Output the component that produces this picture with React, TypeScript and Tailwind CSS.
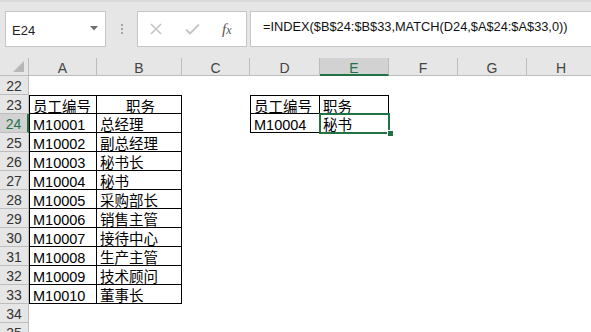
const cols = ["A", "B", "C", "D", "E", "F", "G", "H"];

const cells: Record<string, string> = {
  A23: "员工编号",
  B23: "职务",
  D23: "员工编号",
  E23: "职务",
  D24: "M10004",
  E24: "秘书",
};

const staff = [
  ["M10001", "总经理"],
  ["M10002", "副总经理"],
  ["M10003", "秘书长"],
  ["M10004", "秘书"],
  ["M10005", "采购部长"],
  ["M10006", "销售主管"],
  ["M10007", "接待中心"],
  ["M10008", "生产主管"],
  ["M10009", "技术顾问"],
  ["M10010", "董事长"],
];
staff.forEach(([id, job], i) => {
  cells[`A${24 + i}`] = id;
  cells[`B${24 + i}`] = job;
});

const rows = Array.from({ length: 14 }, (_, i) => 22 + i);

const inTable = (r: number, c: number) =>
  (r >= 23 && r <= 33 && c <= 1) || (r >= 23 && r <= 24 && (c === 3 || c === 4));

function Cell({ r, c }: { r: number; c: number }) {
  const key = `${cols[c]}${r}`;
  const bordered = inTable(r, c);
  const cls = [
    "overflow-hidden whitespace-nowrap bg-white pl-[3px] pt-[3px] leading-[17px] text-[14.5px] text-black",
    bordered ? "border-r border-b border-black" : "",
    bordered && r === 23 ? "border-t" : "",
    bordered && (c === 0 || c === 3) ? "border-l" : "",
    key === "B23" ? "text-center pl-0" : "",
  ].join(" ");
  return <div className={cls}>{cells[key] ?? ""}</div>;
}

export default function App() {
  return (
    <div className="relative h-[332px] w-[591px] overflow-hidden bg-[#e6e6e6] font-['Liberation_Sans','Noto_Sans_CJK_SC',sans-serif]">
      {/* formula bar */}
      <div className="flex h-[58px] items-start border-t-2 border-[#dadada] pt-[9px]">
        <div className="ml-[5px] flex h-[36px] w-[101px] items-center justify-between border border-[#c6c6c6] bg-white pl-[6px] pr-[7px]">
          <span className="pt-[3px] text-[13px] text-[#222]">E24</span>
          <svg width="8" height="5" viewBox="0 0 8 5" className="mt-[-2px]">
            <path d="M0 0h8L4 4.5z" fill="#6f6f6f" />
          </svg>
        </div>
        <div className="flex w-[31px] justify-center pt-[13px]">
          <div className="flex flex-col gap-[2px]">
            <span className="h-[2px] w-[2px] bg-[#a6a6a6]" />
            <span className="h-[2px] w-[2px] bg-[#a6a6a6]" />
            <span className="h-[2px] w-[2px] bg-[#a6a6a6]" />
          </div>
        </div>
        <div className="flex h-[36px] w-[110px] items-center border border-[#c6c6c6] bg-white">
          <svg width="12" height="12" viewBox="0 0 12 12" className="ml-[12px]">
            <path d="M1 1l10 10M11 1L1 11" stroke="#c4c4c4" strokeWidth="1.6" />
          </svg>
          <svg width="15" height="12" viewBox="0 0 15 12" className="ml-[23px]">
            <path d="M1 6.5l4 4L14 1.5" stroke="#c4c4c4" strokeWidth="1.8" fill="none" />
          </svg>
          <span className="ml-[22px] font-['Liberation_Serif',serif] text-[15px] italic leading-none text-[#555]">
            f<span className="text-[12px]">x</span>
          </span>
        </div>
        <div className="ml-[3px] h-[36px] flex-1 border border-r-0 border-[#c6c6c6] bg-white pl-[12px] pt-[7px] text-[12.8px] leading-[16px] text-[#111] whitespace-nowrap">
          =INDEX($B$24:$B$33,MATCH(D24,$A$24:$A$33,0))
        </div>
      </div>

      {/* sheet */}
      <div className="grid grid-cols-[29px_68px_85px_68px_70px_69px_69px_69px_69px] grid-rows-[18px_repeat(14,19px)] bg-white">
        <div className="relative border-r border-b border-[#bdbdbd] bg-[#e6e6e6]">
          <svg width="11" height="11" viewBox="0 0 11 11" className="absolute bottom-[3px] right-[4px]">
            <path d="M11 0V11H0z" fill="#b7b7b7" />
          </svg>
        </div>
        {cols.map((c) => (
          <div
            key={c}
            className={
              c === "E"
                ? "border-b-2 border-r border-b-[#217346] border-r-[#bdbdbd] bg-[#d2d2d2] pt-[1px] text-center text-[14px] leading-[18px] text-[#217346]"
                : "border-b border-r border-[#bdbdbd] bg-[#e6e6e6] pt-[1px] text-center text-[14px] leading-[18px] text-[#444]"
            }
          >
            {c}
          </div>
        ))}
        {rows.map((r) => (
          <div key={r} className="contents">
            <div
              className={
                r === 24
                  ? "border-b border-r-2 border-b-[#bdbdbd] border-r-[#217346] bg-[#d2d2d2] pt-[2px] text-center text-[14px] leading-[17px] text-[#217346]"
                  : "border-b border-r border-[#bdbdbd] bg-[#e6e6e6] pt-[2px] text-center text-[14px] leading-[17px] text-[#333]"
              }
            >
              {r}
            </div>
            {cols.map((c, ci) => (
              <Cell key={c} r={r} c={ci} />
            ))}
          </div>
        ))}
      </div>

      {/* selection of E24 with its fill handle */}
      <div className="pointer-events-none absolute left-[319px] top-[113px] h-[21px] w-[71px] border-2 border-[#217346]" />
      <div className="absolute left-[387px] top-[130px] h-[7px] w-[7px] border border-white bg-[#217346]" />
    </div>
  );
}
